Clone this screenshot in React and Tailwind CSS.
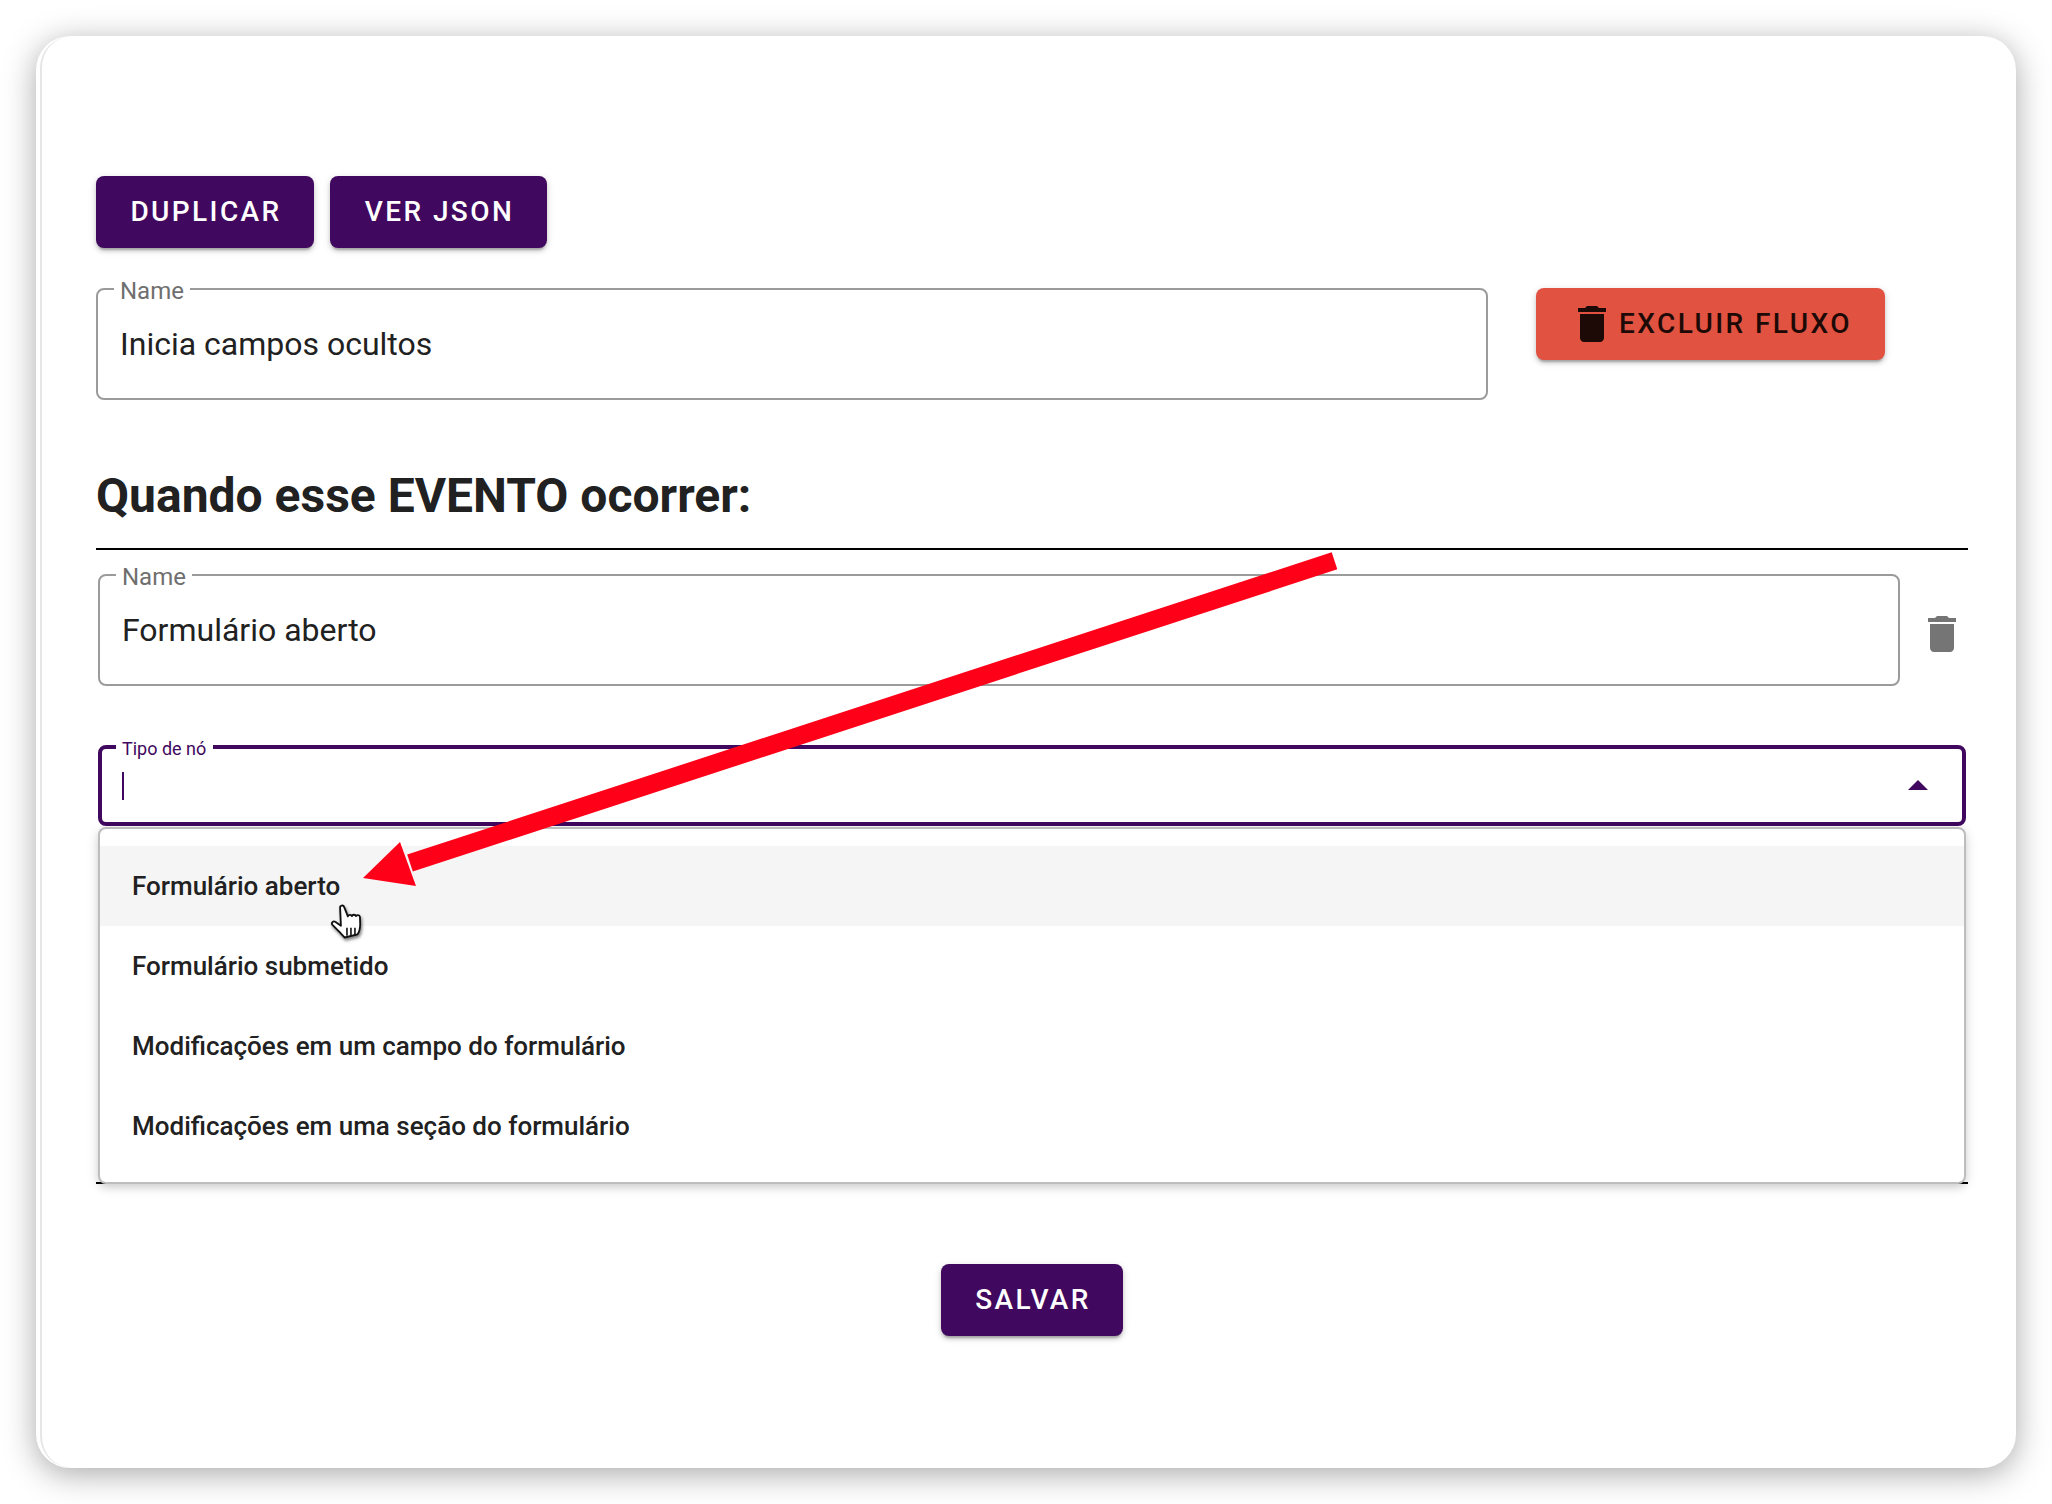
const TrashIcon = ({ className }) => (
  <svg viewBox="0 0 24 24" className={className} fill="currentColor">
    <path d="M6 19c0 1.1.9 2 2 2h8c1.1 0 2-.9 2-2V7H6v12zM19 4h-3.5l-1-1h-5l-1 1H5v2h14V4z" />
  </svg>
);

const Btn = ({ children, className = "" }) => (
  <button className={`h-[72px] rounded-[8px] text-[28px] font-medium tracking-[2.4px] uppercase shadow-[0_4px_2px_-2px_rgba(0,0,0,0.2),0_3px_4px_0_rgba(0,0,0,0.14),0_2px_8px_0_rgba(0,0,0,0.12)] ${className}`}>
    {children}
  </button>
);

const Field = ({ label, value, className = "" }) => (
  <div className={`relative h-[112px] rounded-[8px] border-2 border-[#9b9b9b] ${className}`}>
    <span className="absolute left-[16px] top-[-15px] bg-white px-[6px] text-[24px] leading-[32px] text-[#6f6f6f]">{label}</span>
    <div className="pl-[22px] pt-[30px] text-[32px] leading-[48px] text-[#212121]">{value}</div>
  </div>
);

const items = [
  "Formulário aberto",
  "Formulário submetido",
  "Modificações em um campo do formulário",
  "Modificações em uma seção do formulário",
];

export default function App() {
  return (
    <div className="relative h-[1504px] w-[2052px] overflow-hidden bg-white p-[36px] font-['Roboto',sans-serif]">
      <div className="h-[1432px] w-[1980px] overflow-hidden rounded-[34px] bg-white shadow-[0_6px_32px_rgba(0,0,0,0.34)]">
        <div className="ml-[4px] h-full rounded-l-[32px] border-l-2 border-[#e6e6e6] pl-[54px] pt-[140px]">
          <div className="flex gap-[16px]">
            <Btn className="w-[218px] bg-[#40085e] pl-[2px] text-white">Duplicar</Btn>
            <Btn className="w-[217px] bg-[#40085e] pl-[2px] text-white">Ver JSON</Btn>
          </div>

          <div className="mt-[40px] flex items-start">
            <Field label="Name" value="Inicia campos ocultos" className="w-[1392px]" />
            <Btn className="ml-[48px] flex w-[349px] items-center gap-[3px] whitespace-nowrap bg-[#e25241] pl-[32px] text-[#1d0a07]">
              <TrashIcon className="h-[48px] w-[48px] shrink-0" />
              <span>Excluir fluxo</span>
            </Btn>
          </div>

          <h2 className="mt-[64px] text-[48px] font-bold leading-[64px] text-[#212121]">Quando esse EVENTO ocorrer:</h2>
          <div className="mt-[20px] h-[2px] w-[1872px] bg-black" />

          <div className="mt-[24px] flex w-[1872px] items-start pl-[2px]">
            <Field label="Name" value="Formulário aberto" className="w-[1802px]" />
            <TrashIcon className="ml-[18px] mt-[36px] h-[48px] w-[48px] text-[#757575]" />
          </div>

          <div className="relative ml-[2px] mt-[59px] h-[81px] w-[1868px] rounded-[8px] border-4 border-[#40085e]">
            <span className="absolute left-[14px] top-[-12px] bg-white pl-[6px] pr-[7px] text-[18px] leading-[24px] text-[#40085e]">Tipo de nó</span>
            <div className="ml-[20px] mt-[23px] h-[28px] w-[2px] bg-[#40085e]" />
            <svg viewBox="0 0 20 10" className="absolute right-[34px] top-[31px] h-[10px] w-[20px] fill-[#40085e]">
              <path d="M0 10 L10 0 L20 10 Z" />
            </svg>
            <div className="absolute left-[-2px] top-[80px] z-10 h-[353px] w-[1864px] rounded-[6px] bg-white pt-[17px] shadow-[0_0_0_2px_#bdbdbd,0_4px_8px_1px_rgba(0,0,0,0.14),0_2px_14px_2px_rgba(0,0,0,0.1)]">
              {items.map((t, i) => (
                <div key={t} className={`flex h-[80px] items-center pl-[32px] pt-[1px] text-[26px] font-medium text-[#212121] ${i === 0 ? "bg-[#f5f5f5]" : ""}`}>
                  {t}
                </div>
              ))}
            </div>
          </div>

          <div className="mt-[356px] h-[2px] w-[1872px] bg-black" />

          <div className="mt-[80px] flex w-[1872px] justify-center">
            <Btn className="w-[182px] bg-[#40085e] pl-[2px] text-white">Salvar</Btn>
          </div>
        </div>
      </div>

      <svg className="pointer-events-none absolute left-0 top-0 z-20 h-[1504px] w-[2052px]" viewBox="0 0 2052 1504">
        <path d="M1337.300 569.300 L412.800 871.600 L407.200 854.500 L1331.700 552.200 Z" fill="#ff0019" />
        <path d="M363 878 L400 842 L416 886 Z" fill="#ff0019" />
        <g transform="translate(331 905) scale(1.14)">
          <path
            d="M8 2.500c-.5-2 2.700-3 3.600-.7l3.200 8.200c.2-1.600 3-2 3.600-.2.3-1.600 3-1.800 3.600 0 .5-1.400 3-1.300 3.400.6l.2 6.500c0 3.500-1 7-2.300 8.800l-11.300 2.800c-2-1.800-3-3.400-5.500-5.800l-5.200-5.200c-1.500-1.700.6-4 2.700-2.600l4.700 3.300Z"
            fill="#fff"
            stroke="#111"
            strokeWidth="1.600"
            strokeLinejoin="round"
            style={{ filter: "drop-shadow(1px 2px 1.500px rgba(0,0,0,0.5))" }}
          />
          <path d="M14 20v7M17.500 20v7M21 20v7" stroke="#111" strokeWidth="1.400" fill="none" />
        </g>
      </svg>
    </div>
  );
}
